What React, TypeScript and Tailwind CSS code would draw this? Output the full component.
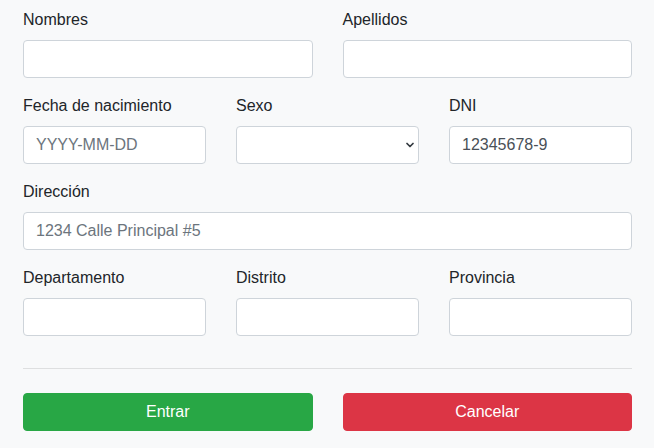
import { ChevronDown } from 'lucide-react';

const inputCls =
  'block w-full h-[38px] rounded-[4px] border border-[#ced4da] bg-white px-3 text-base text-[#495057] placeholder:text-[#6c757d] focus:outline-none';

function Field({ label, children }: { label: string; children: React.ReactNode }) {
  return (
    <div className="mb-4">
      <label className="block mb-2 text-base leading-6 text-[#212529]">{label}</label>
      {children}
    </div>
  );
}

export default function App() {
  return (
    <div
      className="min-h-[448px] bg-[#f8f9fa] pl-[23px] pr-[22px] pt-2 pb-4"
      style={{ fontFamily: '"Liberation Sans", Arial, sans-serif' }}
    >
      <form onSubmit={(e) => e.preventDefault()}>
        <div className="grid grid-cols-2 gap-x-[30px]">
          <Field label="Nombres">
            <input className={inputCls} />
          </Field>
          <Field label="Apellidos">
            <input className={inputCls} />
          </Field>
        </div>

        <div className="grid grid-cols-3 gap-x-[30px]">
          <Field label="Fecha de nacimiento">
            <input className={inputCls} placeholder="YYYY-MM-DD" />
          </Field>
          <Field label="Sexo">
            <div className="relative">
              <select className={inputCls + ' appearance-none pr-8'} defaultValue="">
                <option value=""></option>
                <option value="M">Masculino</option>
                <option value="F">Femenino</option>
              </select>
              <ChevronDown
                className="pointer-events-none absolute right-[3px] top-1/2 h-3 w-3 -translate-y-1/2 text-[#343a40]"
                strokeWidth={3.5}
              />
            </div>
          </Field>
          <Field label="DNI">
            <input className={inputCls} defaultValue="12345678-9" />
          </Field>
        </div>

        <Field label="Dirección">
          <input className={inputCls} placeholder="1234 Calle Principal #5" />
        </Field>

        <div className="grid grid-cols-3 gap-x-[30px]">
          <Field label="Departamento">
            <input className={inputCls} />
          </Field>
          <Field label="Distrito">
            <input className={inputCls} />
          </Field>
          <Field label="Provincia">
            <input className={inputCls} />
          </Field>
        </div>

        <hr className="my-4 border-0 border-t border-[rgba(0,0,0,0.1)]" />

        <div className="mt-6 grid grid-cols-2 gap-x-[30px]">
          <button className="h-[38px] rounded-[4px] border border-[#28a745] bg-[#28a745] text-base text-white">
            Entrar
          </button>
          <button
            type="button"
            className="h-[38px] rounded-[4px] border border-[#dc3545] bg-[#dc3545] text-base text-white"
          >
            Cancelar
          </button>
        </div>
      </form>
    </div>
  );
}
